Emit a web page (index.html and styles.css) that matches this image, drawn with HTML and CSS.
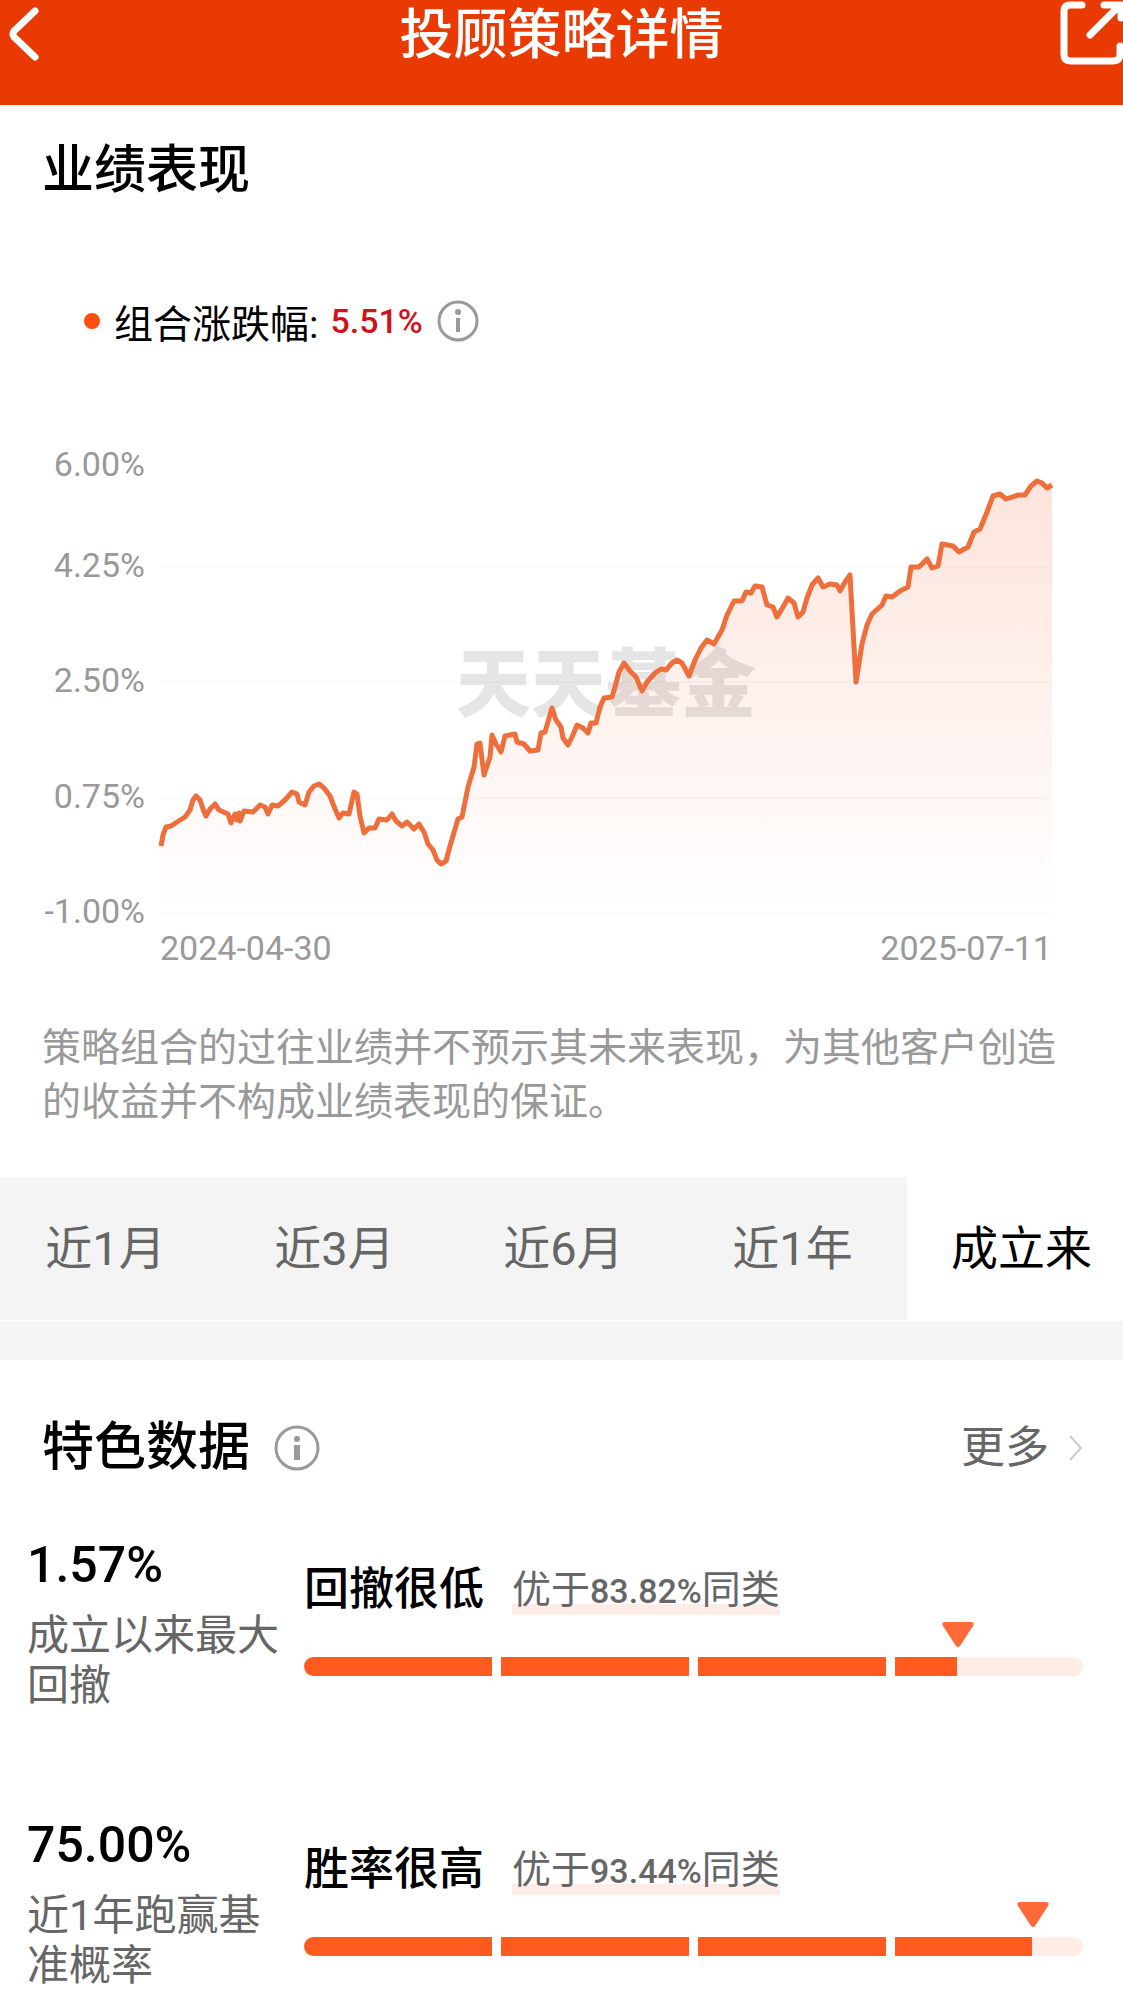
FILE: index.html
```html
<!DOCTYPE html>
<html lang="zh-CN">
<head>
    <meta charset="UTF-8">
    <meta name="viewport" content="width=device-width, initial-scale=1.0">
    <title>投顾策略详情</title>
    <link rel="stylesheet" href="styles.css">
</head>
<body>

    <header class="header">
        <button class="icon-btn" aria-label="返回">
            <svg width="50" height="66" viewBox="0 0 50 66" fill="none" stroke="#fff" stroke-width="7" stroke-linecap="round" stroke-linejoin="round">
                <path d="M35 11L14 31q-2 3 0 6L35 57"/>
            </svg>
        </button>
        <h1>投顾策略详情</h1>
        <button class="icon-btn share-btn" aria-label="分享">
            <svg width="66" height="66" viewBox="0 0 66 66" fill="none" stroke="#fff" stroke-width="7" stroke-linecap="round" stroke-linejoin="round">
                <path d="M25 5H13q-6 0-6 6v43q0 7 7 7h42q7 0 7-7V46"/>
                <path d="M33 35L63 5M47 5H64V18"/>
            </svg>
        </button>
    </header>

    <main>
        <!-- 业绩表现 -->
        <section class="performance">
            <h2>业绩表现</h2>
            <div class="legend">
                <span class="dot"></span>
                <span>组合涨跌幅:</span>
                <strong class="num">5.51%</strong>
                <button class="icon-btn" aria-label="涨跌幅说明">
                    <svg width="42" height="42" viewBox="0 0 42 42" fill="none" stroke="#999">
                        <circle cx="21" cy="21" r="19" stroke-width="3"/>
                        <path d="M21 18v14" stroke-width="4"/>
                        <circle cx="21" cy="12" r="3" fill="#999" stroke="none"/>
                    </svg>
                </button>
            </div>

            <svg class="chart" viewBox="0 0 1123 560" role="img" aria-label="组合业绩走势">
                <defs>
                    <linearGradient id="fade" x1="0" y1="0" x2="0" y2="1">
                        <stop offset="0" stop-color="#fde4dc"/>
                        <stop offset="50%" stop-color="#fef1ed"/>
                        <stop offset="1" stop-color="#fff"/>
                    </linearGradient>
                </defs>
                <path id="area" fill="url(#fade)"/>
                <path class="grid-line" d="M161 137H1052M161 252H1052M161 368H1052M161 483H1052"/>
                <text class="watermark" x="606" y="281">天天基金</text>
                <path id="line" class="line"/>
                <g class="axis axis-end">
                    <text x="145" y="46">6.00%</text>
                    <text x="145" y="147">4.25%</text>
                    <text x="145" y="262">2.50%</text>
                    <text x="145" y="378">0.75%</text>
                    <text x="145" y="493">-1.00%</text>
                    <text x="1052" y="530">2025-07-11</text>
                </g>
                <text class="axis" x="160" y="530">2024-04-30</text>
            </svg>

            <p class="note">策略组合的过往业绩并不预示其未来表现，为其他客户创造的收益并不构成业绩表现的保证。</p>
        </section>

        <nav class="tabs">
            <button>近1月</button>
            <button>近3月</button>
            <button>近6月</button>
            <button>近1年</button>
            <button class="active">成立来</button>
        </nav>

        <!-- 特色数据 -->
        <section class="features">
            <div class="features-head">
                <h2>特色数据</h2>
                <button class="icon-btn" aria-label="特色数据说明">
                    <svg width="46" height="46" viewBox="0 0 46 46" fill="none" stroke="#999">
                        <circle cx="23" cy="23" r="21" stroke-width="3"/>
                        <path d="M23 20v15" stroke-width="6"/>
                        <circle cx="23" cy="14" r="3" fill="#999" stroke="none"/>
                    </svg>
                </button>
                <a class="more" href="#">更多
                    <svg width="14" height="28" viewBox="0 0 14 28" fill="none" stroke="#ccc" stroke-width="2">
                        <path d="M1 2L12 14 1 26"/>
                    </svg>
                </a>
            </div>

            <div class="metric">
                <div class="metric-info">
                    <div class="value num">1.57%</div>
                    <p class="label">成立以来最大回撤</p>
                </div>
                <div class="rating">
                    <div class="rating-head">
                        <h3>回撤很低</h3>
                        <span class="rank">优于<b class="num">83.82%</b>同类</span>
                    </div>
                    <div class="bar">
                        <span class="full"></span>
                        <span class="full"></span>
                        <span class="full"></span>
                        <span><i style="width: 33%"></i></span>
                        <svg class="marker" style="left: 83.9%" width="32" height="26" viewBox="0 0 32 26">
                            <path d="M3 0H29q4 0 2 4L18 24q-2 2-4 0L1 4q-2-4 2-4Z" fill="#ff6a38"/>
                        </svg>
                    </div>
                </div>
            </div>

            <div class="metric">
                <div class="metric-info">
                    <div class="value num">75.00%</div>
                    <p class="label">近1年跑赢基准概率</p>
                </div>
                <div class="rating">
                    <div class="rating-head">
                        <h3>胜率很高</h3>
                        <span class="rank">优于<b class="num">93.44%</b>同类</span>
                    </div>
                    <div class="bar">
                        <span class="full"></span>
                        <span class="full"></span>
                        <span class="full"></span>
                        <span><i style="width: 73%"></i></span>
                        <svg class="marker" style="left: 93.6%" width="32" height="26" viewBox="0 0 32 26">
                            <path d="M3 0H29q4 0 2 4L18 24q-2 2-4 0L1 4q-2-4 2-4Z" fill="#ff6a38"/>
                        </svg>
                    </div>
                </div>
            </div>
        </section>
    </main>

    <script>
        // 走势数据 (x y)
        const points = [
            '161 416 163 405 166 397 171 396 177 392 185 387 190 380 193 370 196 366 200 370',
            '203 379 206 386 210 379 215 374 219 380 228 384 231 393 235 384 237 390 239 383',
            '240 391 244 381 253 382 260 375 265 377 268 384 272 375 278 376 285 370 292 362',
            '297 364 299 372 305 375 309 362 314 356 319 354 324 358 330 366 335 379 339 388',
            '343 383 349 384 354 362 357 364 360 386 364 403 369 398 375 398 379 389 387 390',
            '392 384 396 391 402 396 407 392 414 399 419 394 424 402 428 414 433 420 437 430',
            '441 434 446 431 450 416 458 389 462 387 468 357 474 337 477 314 480 313 484 345',
            '490 327 492 305 496 314 501 322 505 306 515 304 517 312 524 314 530 321 538 320',
            '541 303 545 302 552 278 556 290 561 297 563 308 568 315 572 307 577 295 583 298',
            '588 303 591 293 596 293 600 277 604 268 612 267 615 257 619 242 624 233 630 241',
            '636 247 642 261 647 252 655 243 661 239 666 240 672 233 677 230 682 233 689 246',
            '695 230 701 218 707 210 714 214 722 200 727 185 734 171 742 171 746 162 751 163',
            '755 156 762 157 767 175 773 177 777 187 783 177 788 168 794 173 798 187 803 182',
            '807 168 812 155 818 148 823 157 830 154 837 155 840 161 845 152 850 145 856 252',
            '862 214 867 195 872 184 882 175 886 166 892 167 900 161 908 157 911 137 919 137',
            '927 129 932 138 938 136 942 114 953 116 959 122 968 117 974 102 980 99 987 82',
            '993 66 1000 64 1006 69 1018 65 1025 65 1031 56 1037 51 1042 53 1047 58 1052 55'
        ].join(' ');

        document.getElementById('line').setAttribute('d', `M${points}`);
        document.getElementById('area').setAttribute('d', `M161 483 ${points} 1052 483Z`);
    </script>

</body>
</html>
```
FILE: styles.css
```css
* {
    margin: 0;
    padding: 0;
    box-sizing: border-box;
}

body {
    font-family: Roboto, "Noto Sans CJK SC", sans-serif;
    background: #fff;
    color: #000;
    overflow-x: hidden;
}

button {
    font-family: inherit;
    background: none;
    border: none;
    cursor: pointer;
}

svg {
    display: block;
}

h2 {
    font-size: 52px;
    font-weight: 500;
    line-height: 60px;
}

.num {
    font-weight: 500;
}

/* 顶部栏 */
.header {
    display: grid;
    grid-template-columns: 1fr auto 1fr;
    align-items: start;
    height: 105px;
    background: #e93a03;
    color: #fff;
}

.header h1 {
    font-size: 54px;
    font-weight: 500;
    line-height: 72px;
}

.share-btn {
    justify-self: end;
}

/* 业绩表现 */
.performance {
    padding: 36px 0 48px;
}

.performance h2 {
    padding: 0 42px;
}

.legend {
    display: flex;
    align-items: center;
    height: 48px;
    margin-top: 96px;
    padding-left: 84px;
    font-size: 39px;
}

.legend .dot {
    width: 16px;
    height: 16px;
    margin-right: 14px;
    border-radius: 50%;
    background: #ff4d0d;
}

.legend strong {
    margin: 0 14px 0 12px;
    font-size: 34px;
    color: #d0121b;
}

.chart {
    width: 100%;
    margin-top: 85px;
}

.grid-line {
    stroke: #000;
    stroke-opacity: 0.02;
    stroke-width: 2;
}

.line {
    fill: none;
    stroke: #ee6f3b;
    stroke-width: 5;
    stroke-linejoin: round;
}

.watermark {
    font-size: 75px;
    font-weight: 900;
    text-anchor: middle;
    fill: #000;
    fill-opacity: 0.1;
}

.axis {
    font-size: 34px;
    fill: #999;
}

.axis-end {
    text-anchor: end;
}

.note {
    margin-top: 31px;
    padding: 0 60px 0 42px;
    font-size: 39px;
    line-height: 54px;
    color: #999;
}

/* 区间切换 */
.tabs {
    display: grid;
    grid-template-columns: repeat(5, 1fr);
    margin: 0 -13px 0 -9px;
    border-bottom: 1px solid #fff;
    background: #f4f4f4;
}

.tabs button {
    height: 143px;
    padding-bottom: 8px;
    font-size: 47px;
    color: #666;
}

.tabs .active {
    background: #fff;
    color: #000;
}

/* 特色数据 */
.features {
    padding: 58px 40px 18px 27px;
    border-top: 39px solid #f4f4f4;
}

.features-head {
    display: flex;
    align-items: center;
    gap: 24px;
    padding-left: 15px;
}

.more {
    display: flex;
    align-items: center;
    gap: 20px;
    margin-left: auto;
    font-size: 44px;
    line-height: 60px;
    color: #666;
    text-decoration: none;
}

.metric {
    display: grid;
    grid-template-columns: 277px 1fr;
    margin-top: 55px;
}

.metric + .metric {
    margin-top: 102px;
}

.metric-info {
    padding-right: 24px;
}

.value {
    font-size: 50px;
    line-height: 64px;
}

.label {
    margin-top: 14px;
    font-size: 42px;
    line-height: 50px;
    color: #666;
}

.rating {
    padding-top: 33px;
}

.rating-head {
    display: flex;
    align-items: center;
    gap: 28px;
    height: 48px;
}

.rating-head h3 {
    font-size: 45px;
    font-weight: 500;
    line-height: 48px;
}

.rank {
    font-size: 39px;
    line-height: 48px;
    color: #666;
    background: linear-gradient(#fdece7, #fdece7) bottom / 100% 11px no-repeat;
}

.rank .num {
    font-size: 34px;
}

.bar {
    position: relative;
    display: grid;
    grid-template-columns: repeat(4, 1fr);
    gap: 9px;
    height: 19px;
    margin-top: 43px;
}

.bar span {
    overflow: hidden;
    background: #feece6;
}

.bar span:first-child {
    border-radius: 10px 0 0 10px;
}

.bar span:nth-child(4) {
    border-radius: 0 10px 10px 0;
}

.bar .full,
.bar i {
    display: block;
    height: 100%;
    background: #ff5a20;
}

/* 当前位置三角 */
.marker {
    position: absolute;
    bottom: 28px;
    transform: translateX(-50%);
}
```
